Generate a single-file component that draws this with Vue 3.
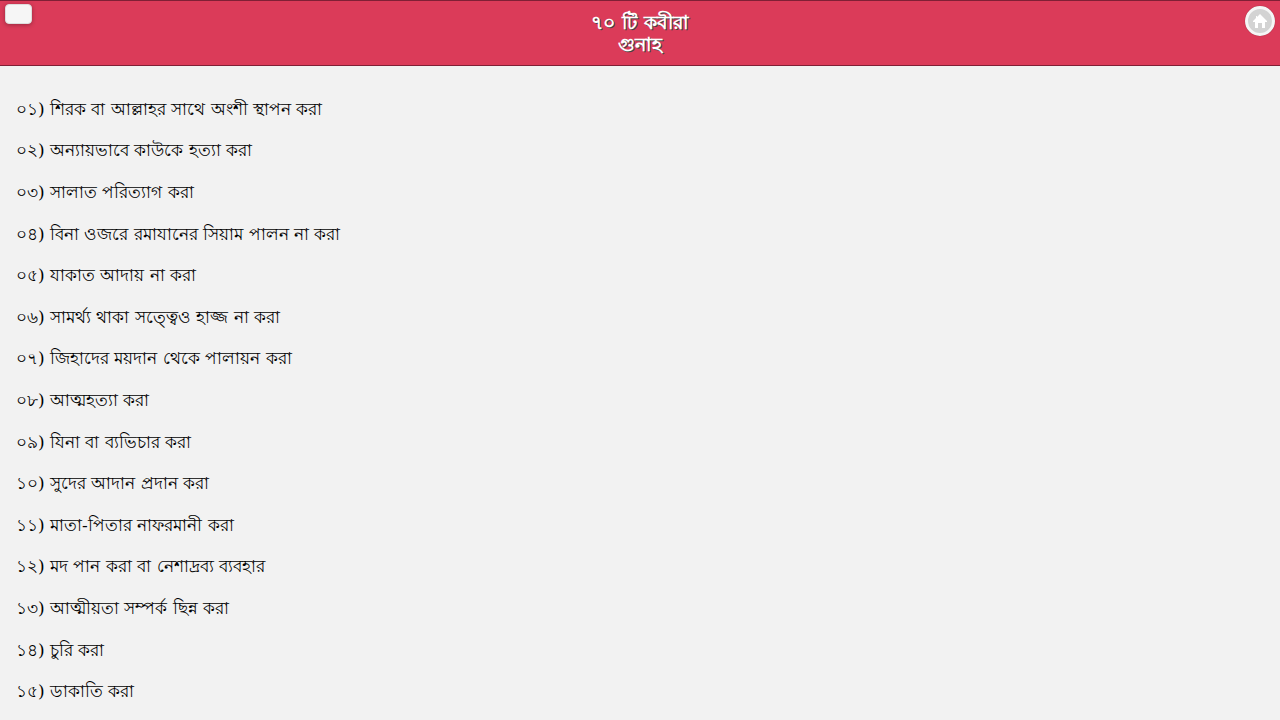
<script setup>
const items = [
  '০১) শিরক বা আল্লাহর সাথে অংশী স্থাপন করা',
  '০২) অন্যায়ভাবে কাউকে হত্যা করা',
  '০৩) সালাত পরিত্যাগ করা',
  '০৪) বিনা ওজরে রমাযানের সিয়াম পালন না করা',
  '০৫) যাকাত আদায় না করা',
  '০৬) সামর্থ্য থাকা সত্ত্বেও হাজ্জ না করা',
  '০৭) জিহাদের ময়দান থেকে পালায়ন করা',
  '০৮) আত্মহত্যা করা',
  '০৯) যিনা বা ব্যভিচার করা',
  '১০) সুদের আদান প্রদান করা',
  '১১) মাতা-পিতার নাফরমানী করা',
  '১২) মদ পান করা বা নেশাদ্রব্য ব্যবহার',
  '১৩) আত্মীয়তা সম্পর্ক ছিন্ন করা',
  '১৪) চুরি করা',
  '১৫) ডাকাতি করা',
]
</script>

<template>
  <div class="page">
    <header class="header">
      <button class="menu" type="button" aria-label="Menu"></button>
      <h1 class="title">৭০ টি কবীরা গুনাহ</h1>
      <a class="home" href="#" aria-label="Home">
        <svg viewBox="0 0 16 16" width="16" height="16">
          <path d="M8 1 L15 8 V9 H13 V15 H10 V10 H6 V15 H3 V9 H1 V8 L4 5 V3 H5 V4 Z" fill="#fff" />
        </svg>
      </a>
    </header>
    <main class="content">
      <p v-for="item in items" :key="item" class="item">{{ item }}</p>
    </main>
  </div>
</template>

<style>
body {
  background: #f2f2f2;
}
</style>

<style scoped>
.page {
  display: flex;
  flex-direction: column;
  min-height: 100vh;
  font-family: Vrinda, "DejaVu Serif", serif;
  font-size: 17px;
  color: #000;
}
.header {
  display: flex;
  justify-content: space-between;
  align-items: flex-start;
  padding: 0 5px;
  border-top: 1px solid #801f35;
  border-bottom: 1px solid #801f35;
  background: #db3b59;
}
.menu {
  box-sizing: border-box;
  width: 27px;
  height: 20px;
  margin: 3px 3px 0 0;
  padding: 0;
  border: 1px solid #ddd;
  border-radius: 4px;
  background: #f6f6f6;
  box-shadow: 0 1px 4px rgba(0, 0, 0, 0.3);
}
.title {
  width: 120px;
  margin: 0;
  padding: 10px 0;
  font-size: 19px;
  line-height: 22px;
  text-align: center;
  color: #fff;
  text-shadow: 1px 1px 0 #444;
}
.home {
  display: flex;
  box-sizing: border-box;
  width: 30px;
  height: 30px;
  margin-top: 5px;
  align-items: center;
  justify-content: center;
  border: 3px solid #f6f6f6;
  border-radius: 50%;
  background: #d3d3d3;
  box-shadow: 0 0 1px rgba(0, 0, 0, 0.4);
}
.content {
  display: grid;
  flex: 1;
  grid-auto-rows: 1fr;
  align-items: center;
  padding: 22px 16px 8px;
}
.item {
  margin: 0;
  line-height: 26px;
}
</style>
